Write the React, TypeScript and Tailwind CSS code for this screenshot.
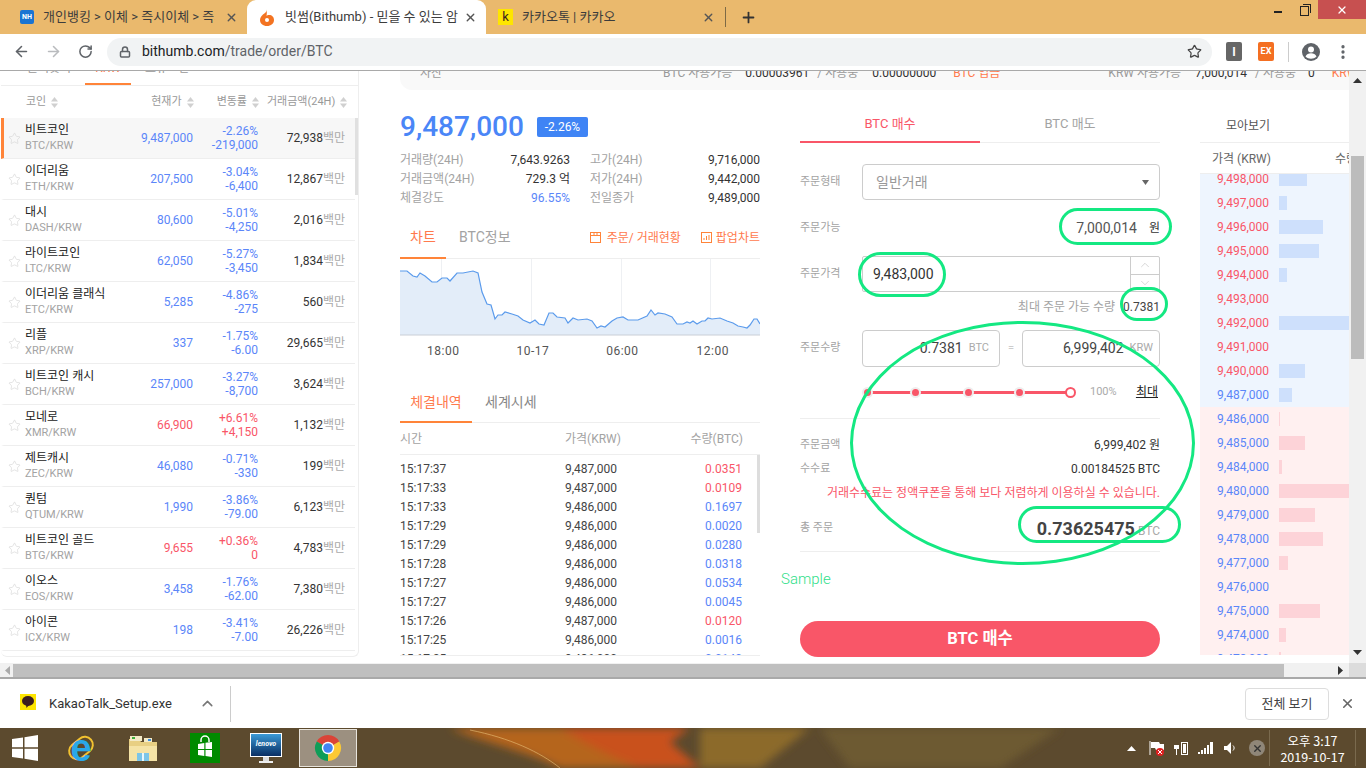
import { ArrowLeft, ArrowRight, ChevronDown, ChevronUp, Lock, MoreVertical, Plus, RotateCw, Star, X } from 'lucide-react';

const COINS = [
  ['비트코인', 'BTC/KRW', '9,487,000', '-2.26%', '-219,000', '72,938'],
  ['이더리움', 'ETH/KRW', '207,500', '-3.04%', '-6,400', '12,867'],
  ['대시', 'DASH/KRW', '80,600', '-5.01%', '-4,250', '2,016'],
  ['라이트코인', 'LTC/KRW', '62,050', '-5.27%', '-3,450', '1,834'],
  ['이더리움 클래식', 'ETC/KRW', '5,285', '-4.86%', '-275', '560'],
  ['리플', 'XRP/KRW', '337', '-1.75%', '-6.00', '29,665'],
  ['비트코인 캐시', 'BCH/KRW', '257,000', '-3.27%', '-8,700', '3,624'],
  ['모네로', 'XMR/KRW', '66,900', '+6.61%', '+4,150', '1,132'],
  ['제트캐시', 'ZEC/KRW', '46,080', '-0.71%', '-330', '199'],
  ['퀀텀', 'QTUM/KRW', '1,990', '-3.86%', '-79.00', '6,123'],
  ['비트코인 골드', 'BTG/KRW', '9,655', '+0.36%', '0', '4,783'],
  ['이오스', 'EOS/KRW', '3,458', '-1.76%', '-62.00', '7,380'],
  ['아이콘', 'ICX/KRW', '198', '-3.41%', '-7.00', '26,226'],
];

const TRADES: [string, string, string, boolean][] = [
  ['15:17:37', '9,487,000', '0.0351', true],
  ['15:17:33', '9,487,000', '0.0109', true],
  ['15:17:33', '9,486,000', '0.1697', false],
  ['15:17:29', '9,486,000', '0.0020', false],
  ['15:17:29', '9,486,000', '0.0280', false],
  ['15:17:28', '9,486,000', '0.0318', false],
  ['15:17:27', '9,486,000', '0.0534', false],
  ['15:17:27', '9,486,000', '0.0045', false],
  ['15:17:26', '9,487,000', '0.0120', true],
  ['15:17:25', '9,486,000', '0.0016', false],
  ['15:17:25', '9,486,000', '0.0140', false],
];

const ASKS: [string, number][] = [
  ['9,498,000', 28], ['9,497,000', 8], ['9,496,000', 44], ['9,495,000', 40], ['9,494,000', 8],
  ['9,493,000', 0], ['9,492,000', 70], ['9,491,000', 0], ['9,490,000', 26],
];
const BIDS: [string, number][] = [
  ['9,486,000', 1], ['9,485,000', 26], ['9,484,000', 3], ['9,480,000', 70], ['9,479,000', 36],
  ['9,478,000', 44], ['9,477,000', 9], ['9,476,000', 0], ['9,475,000', 41], ['9,474,000', 7], ['9,473,000', 2],
];

// traced from the chart, in px relative to the plot's top-left
const CHART = [
  [0, 52], [7, 52], [13, 57], [17, 58], [20, 54], [25, 57], [32, 63], [37, 63], [42, 59], [47, 59], [50, 62],
  [57, 54], [63, 54], [73, 52], [78, 54], [82, 73], [87, 85], [91, 86], [95, 100], [98, 96], [102, 96], [105, 93],
  [112, 95], [118, 97], [123, 101], [130, 104], [135, 101], [139, 105], [144, 106], [149, 94], [153, 94], [157, 98],
  [165, 99], [168, 104], [173, 99], [178, 101], [187, 100], [192, 102], [197, 109], [201, 107], [205, 108], [212, 102],
  [217, 99], [223, 98], [228, 101], [238, 101], [247, 97], [251, 91], [255, 96], [258, 94], [265, 95], [272, 98],
  [277, 105], [283, 105], [287, 103], [290, 104], [293, 102], [297, 105], [302, 102], [305, 102], [308, 99], [312, 100],
  [320, 99], [327, 102], [333, 104], [338, 107], [343, 108], [347, 109], [350, 106], [354, 100], [357, 100], [360, 105],
].map(([x, y]) => [x, y - 40]);

const linePath = CHART.map(([x, y]) => `${x},${y}`).join(' ');

function SortIcon() {
  return (
    <svg width="7" height="13" viewBox="0 0 7 13" className="shrink-0 text-[#d0d0d0]" fill="currentColor">
      <path d="M3.5 1 7 5.5H0z" />
      <path d="M3.5 12 0 7.5h7z" />
    </svg>
  );
}

function BrowserTabs() {
  return (
    <div className="relative flex h-[34px] shrink-0 items-stretch bg-[#eab96d] text-[13px] text-[#3c3c3c]">
      <div className="flex w-[247px] items-center pl-[20px]">
        <div className="flex h-[14px] w-[14px] shrink-0 items-center justify-center rounded-[2px] bg-[#1a74d2] text-[7px] font-bold text-white">NH</div>
        <span className="ml-[9px] w-[172px] overflow-hidden whitespace-nowrap">개인뱅킹 &gt; 이체 &gt; 즉시이체 &gt; 즉시이체</span>
        <X size={13} strokeWidth={2.5} className="ml-[10px] shrink-0 text-[#555]" />
      </div>
      <div className="flex w-[239px] items-center rounded-t-[9px] bg-white pl-[13px]">
        <svg width="14" height="17" viewBox="0 0 14 17" className="shrink-0">
          <path d="M6 0c1 2 0 3-1 4C2 6 0 8 0 11c0 3.500 3 6 7 6s7-2.500 7-6c0-3-2-5-5-5-1 0-2 .3-2.500 1C7 4.500 7 2 6 0z" fill="#f37321" />
          <circle cx="7" cy="11" r="2" fill="#fff" />
        </svg>
        <span className="ml-[11px] w-[173px] overflow-hidden whitespace-nowrap">빗썸(Bithumb) - 믿을 수 있는 암호화폐</span>
        <X size={13} strokeWidth={2.5} className="ml-[6px] shrink-0 text-[#555]" />
      </div>
      <div className="flex w-[239px] items-center pl-[12px]">
        <div className="flex h-[16px] w-[15px] shrink-0 items-center justify-center bg-[#fee500] text-[13px] text-[#3c1e1e]">k</div>
        <span className="ml-[9px] w-[180px] whitespace-nowrap">카카오톡 | 카카오</span>
        <X size={13} strokeWidth={2.5} className="shrink-0 text-[#555]" />
      </div>
      <div className="mt-[7px] h-[20px] w-px bg-[#7d6a45]" />
      <Plus size={17} strokeWidth={2.5} className="ml-[14px] mt-[9px] text-[#333]" />
      <div className="ml-auto flex h-[19px] items-start">
        <div className="mr-[18px] mt-[11px] h-[2px] w-[8px] bg-[#222]" />
        <div className="relative mr-[9px] mt-[6px] h-[10px] w-[9px] border border-[#222]">
          <div className="absolute -right-[3px] -top-[3px] h-[9px] w-[8px] border-r border-t border-[#222]" />
        </div>
        <div className="flex h-[19px] w-[48px] items-center justify-center bg-[#c75050]">
          <X size={12} strokeWidth={2.5} className="text-white" />
        </div>
      </div>
    </div>
  );
}

function Toolbar() {
  return (
    <div className="flex h-[37px] shrink-0 items-center border-b border-[#a9a9a9] bg-white pb-[1px]">
      <ArrowLeft size={17} strokeWidth={2.2} className="ml-[13px] text-[#5f6368]" />
      <ArrowRight size={17} strokeWidth={2.2} className="ml-[15px] text-[#b9bbbe]" />
      <RotateCw size={15} strokeWidth={2.4} className="ml-[16px] text-[#5f6368]" />
      <div className="ml-[14px] flex h-[28px] w-[1105px] items-center rounded-full bg-[#f1f3f4] pl-[12px] text-[14px]">
        <Lock size={12} strokeWidth={3} className="text-[#5f6368]" />
        <span className="ml-[11px] text-[#202124]">bithumb.com</span>
        <span className="text-[#5f6368]">/trade/order/BTC</span>
        <Star size={15} strokeWidth={2} className="ml-auto mr-[10px] text-[#444]" />
      </div>
      <div className="ml-[14px] flex h-[19px] w-[16px] items-center justify-center rounded-[2px] bg-[#666] text-[12px] font-bold text-white">I</div>
      <div className="ml-[16px] flex h-[19px] w-[16px] items-center justify-center rounded-[2px] bg-[#f46f22] text-[9px] font-bold text-white">EX</div>
      <div className="ml-[14px] h-[20px] w-px bg-[#ccc]" />
      <svg width="18" height="18" viewBox="0 0 18 18" className="ml-[13px]">
        <circle cx="9" cy="9" r="9" fill="#5f6368" />
        <circle cx="9" cy="6.500" r="3" fill="#fff" />
        <path d="M3.500 13.500c1-2.500 3-3.200 5.500-3.200s4.500.7 5.500 3.200C13 15 11 15.700 9 15.700S5 15 3.500 13.500z" fill="#fff" />
      </svg>
      <MoreVertical size={18} strokeWidth={2.4} className="ml-[14px] text-[#5f6368]" />
    </div>
  );
}

function CoinList() {
  return (
    <div className="ml-px w-[358px] shrink-0 rounded-b-[6px] border-b border-r border-[#eee] pb-[5px]">
      <div className="flex h-[45px] items-end whitespace-nowrap border-b border-[#eee] text-[12px] text-[#999]">
        <span className="mb-[8px] ml-[26px] w-[58px]">즐겨찾기</span>
        <div className="relative flex h-[45px] w-[46px] justify-center border-b-2 border-[#ff8439]">
          <span className="absolute bottom-[6px] text-[#ff7a4d]">KRW</span>
        </div>
        <span className="mb-[8px] ml-[14px]">보유코인</span>
      </div>
      <div className="flex h-[32px] items-center whitespace-nowrap text-[11px] text-[#999]">
        <span className="ml-[25px]">코인</span>
        <span className="ml-[5px]"><SortIcon /></span>
        <span className="ml-[93px]">현재가</span>
        <span className="ml-[5px]"><SortIcon /></span>
        <span className="ml-[23px]">변동률</span>
        <span className="ml-[5px]"><SortIcon /></span>
        <span className="ml-[8px]">거래금액(24H)</span>
        <span className="ml-[5px]"><SortIcon /></span>
      </div>
      <div className="flex">
        <div className="w-[355px]">
          {COINS.map((c, i) => {
            const up = c[3].startsWith('+');
            const priceColor = up ? 'text-[#f95668]' : 'text-[#5b86f9]';
            return (
              <div
                key={c[1]}
                className={`flex h-[41px] items-center border-b border-[#eee] ${i === 0 ? 'border-l-[3px] border-l-[#ff8439] bg-[#f7f7f7]' : 'border-l-[3px] border-l-transparent'}`}
              >
                <Star size={13} strokeWidth={1.2} className="ml-[4px] shrink-0 text-[#d5d5d5]" />
                <div className="ml-[4px] w-[100px] shrink-0 whitespace-nowrap leading-[15px]">
                  <div className="text-[12px] text-[#222]">{c[0]}</div>
                  <div className="text-[11px] text-[#a3a3a3]">{c[1]}</div>
                </div>
                <div className={`w-[68px] shrink-0 text-right text-[12px] ${priceColor}`}>{c[2]}</div>
                <div className={`w-[65px] shrink-0 text-right text-[12px] leading-[14px] ${priceColor}`}>
                  <div>{c[3]}</div>
                  <div>{c[4]}</div>
                </div>
                <div className="w-[87px] shrink-0 text-right text-[12px] text-[#333]">
                  {c[5]}
                  <span className="text-[#aaa]">백만</span>
                </div>
              </div>
            );
          })}
        </div>
        <div className="w-[3px]">
          <div className="h-[77px] bg-[#e0e0e0]" />
        </div>
      </div>
    </div>
  );
}

function TopBar() {
  return (
    <div className="flex h-[49px] items-end whitespace-nowrap rounded-bl-[12px] bg-[#f9f9f9] pb-[8px] pl-[20px] text-[12px] text-[#999]">
      <span>자산</span>
      <span className="ml-[221px]">BTC 사용가능</span>
      <span className="ml-[13px] text-[#333]">0.00003961</span>
      <span className="ml-[8px]">/ 사용중</span>
      <span className="ml-[14px] text-[#333]">0.00000000</span>
      <span className="ml-[17px] text-[#ff7a4d]">BTC 입금</span>
      <span className="ml-[108px]">KRW 사용가능</span>
      <span className="ml-[14px] text-[#333]">7,000,014</span>
      <span className="ml-[8px]">/ 사용중</span>
      <span className="ml-[12px] text-[#333]">0</span>
      <span className="ml-[17px] text-[#ff7a4d]">KRW</span>
    </div>
  );
}

function Stat({ label, value, blue }: { label: string; value: string; blue?: boolean }) {
  return (
    <div className="flex h-[19px] items-center justify-between text-[12px]">
      <span className="text-[#a3a3a3]">{label}</span>
      <span className={blue ? 'text-[#5b86f9]' : 'text-[#333]'}>{value}</span>
    </div>
  );
}

function MarketColumn() {
  return (
    <div className="w-[360px] shrink-0">
      <div className="mt-[21px] flex h-[32px] items-center">
        <span className="text-[28px] font-medium leading-none text-[#4a86f7]">9,487,000</span>
        <span className="ml-[13px] flex h-[20px] w-[51px] items-center justify-center rounded-[2px] bg-[#3f84f5] text-[12px] text-white">-2.26%</span>
      </div>
      <div className="mt-[7px] grid grid-cols-[170px_170px] gap-x-[20px]">
        <Stat label="거래량(24H)" value="7,643.9263" />
        <Stat label="고가(24H)" value="9,716,000" />
        <Stat label="거래금액(24H)" value="729.3 억" />
        <Stat label="저가(24H)" value="9,442,000" />
        <Stat label="체결강도" value="96.55%" blue />
        <Stat label="전일종가" value="9,489,000" />
      </div>

      <div className="mt-[10px] flex h-[42px] items-stretch border-b border-[#eee] text-[14px]">
        <div className="-mb-px flex w-[46px] items-center justify-center border-b-2 border-[#ff8439] text-[#ff7a4d]">차트</div>
        <div className="ml-[13px] flex items-center text-[#a3a3a3]">BTC정보</div>
        <div className="ml-auto flex items-center text-[12px] text-[#ff7a4d]">
          <svg width="11" height="11" viewBox="0 0 11 11" fill="none" stroke="#ff8439">
            <rect x="0.500" y="0.500" width="10" height="10" />
            <path d="M1 3.500h9M3 2h2M6 2h2" />
          </svg>
          <span className="ml-[6px]">주문/ 거래현황</span>
          <svg width="11" height="11" viewBox="0 0 11 11" fill="none" stroke="#ff8439" className="ml-[20px]">
            <rect x="0.500" y="0.500" width="10" height="10" />
            <path d="M3 8V6M5.500 8V4M8 8V3" />
          </svg>
          <span className="ml-[4px]">팝업차트</span>
        </div>
      </div>

      <svg width="360" height="77" viewBox="0 0 360 77" className="block">
        <path d="M41.500 0V76M131.500 0V76M221.500 0V76M310.500 0V76" stroke="#eef0f3" />
        <polygon points={`0,76 ${linePath} 360,76`} fill="#e3edf9" />
        <polyline points={linePath} fill="none" stroke="#5b9bec" strokeWidth="1.200" />
        <path d="M0 76H360" stroke="#c9ced6" />
      </svg>
      <div className="flex h-[29px] items-center text-[12px] tracking-[0.5px] text-[#555]">
        <span className="ml-[27px]">18:00</span>
        <span className="ml-[57px]">10-17</span>
        <span className="ml-[57px]">06:00</span>
        <span className="ml-[58px]">12:00</span>
      </div>

      <div className="mt-[14px] flex h-[44px] items-stretch border-b border-[#eee] text-[14px]">
        <div className="-mb-px flex w-[72px] items-center justify-center border-b-2 border-[#ff8439] pt-[4px] text-[#ff7a4d]">체결내역</div>
        <div className="ml-[13px] flex items-center pt-[4px] text-[#888]">세계시세</div>
      </div>
      <div className="flex h-[32px] items-center border-b border-[#eee] text-[12px] text-[#a3a3a3]">
        <span className="w-[165px]">시간</span>
        <span>가격(KRW)</span>
        <span className="ml-auto mr-[17px]">수량(BTC)</span>
      </div>
      <div className="flex h-[201px] overflow-hidden border-b border-[#eee]">
        <div className="flex-1 pt-[4px]">
          {TRADES.map((t, i) => (
            <div key={i} className="flex h-[19px] items-center text-[12px] text-[#444]">
              <span className="w-[165px]">{t[0]}</span>
              <span>{t[1]}</span>
              <span className={`ml-auto mr-[15px] ${t[3] ? 'text-[#f95668]' : 'text-[#5b86f9]'}`}>{t[2]}</span>
            </div>
          ))}
        </div>
        <div className="w-[3px]">
          <div className="h-[78px] bg-[#ddd]" />
        </div>
      </div>
    </div>
  );
}

function OrderColumn() {
  return (
    <div className="w-[360px] shrink-0 text-[11px] text-[#a3a3a3]">
      <div className="flex h-[53px]">
        <div className="flex w-[180px] items-center justify-center border-b-2 border-[#f95668] pt-[17px] text-[13px] text-[#f95668]">BTC 매수</div>
        <div className="flex w-[180px] items-center justify-center border-b border-[#eee] pt-[16px] text-[13px] text-[#a3a3a3]">BTC 매도</div>
      </div>

      <div className="mt-[21px] flex h-[36px] items-center">
        <span className="w-[62px]">주문형태</span>
        <div className="flex h-[36px] flex-1 items-center rounded-[4px] border border-[#ccc] pl-[13px] pr-[10px] text-[14px] text-[#999]">
          일반거래
          <svg width="7" height="5" viewBox="0 0 7 5" className="ml-auto" fill="#666"><path d="M0 0h7L3.500 5z" /></svg>
        </div>
      </div>

      <div className="mt-[10px] flex h-[36px] items-center">
        <span>주문가능</span>
        <span className="ml-auto text-[14px] text-[#555]">7,000,014</span>
        <span className="ml-[12px] text-[12px] text-[#333]">원</span>
      </div>

      <div className="mt-[10px] flex h-[36px] items-center">
        <span className="w-[62px]">주문가격</span>
        <div className="flex h-[36px] flex-1 items-center rounded-[2px] border border-[#ccc] pl-[10px] text-[14px] text-[#333]">
          9,483,000
          <div className="ml-auto flex h-full w-[29px] flex-col border-l border-[#ccc] text-[#bbb]">
            <div className="flex flex-1 items-center justify-center border-b border-[#ccc]"><ChevronUp size={14} strokeWidth={1} /></div>
            <div className="flex flex-1 items-center justify-center"><ChevronDown size={14} strokeWidth={1} /></div>
          </div>
        </div>
      </div>

      <div className="mt-[7px] flex h-[16px] items-center justify-end text-[12px]">
        <span>최대 주문 가능 수량</span>
        <span className="ml-[8px] text-[#444]">0.7381</span>
      </div>

      <div className="mt-[15px] flex h-[37px] items-center">
        <span className="w-[62px]">주문수량</span>
        <div className="flex h-[37px] w-[138px] items-center justify-end rounded-[4px] border border-[#ccc] pr-[10px] text-[14px] text-[#444]">
          0.7381<span className="ml-[6px] text-[11px] text-[#aaa]">BTC</span>
        </div>
        <span className="w-[22px] text-center text-[11px] text-[#ccc]">=</span>
        <div className="flex h-[37px] w-[138px] items-center justify-end rounded-[4px] border border-[#ccc] pr-[6px] text-[14px] text-[#444]">
          6,999,402<span className="ml-[6px] text-[11px] text-[#aaa]">KRW</span>
        </div>
      </div>

      <div className="mt-[17px] flex h-[16px] items-center">
        <div className="relative ml-[65px] h-[3px] w-[208px] bg-[#f95668]">
          {[0, 48, 101, 152].map((x) => (
            <span key={x} className="absolute -top-[2px] h-[7px] w-[7px] rounded-full bg-[#f95668] ring-2 ring-[#eee]" style={{ left: x - 1 }} />
          ))}
          <span className="absolute -right-[3px] -top-[4px] h-[11px] w-[11px] rounded-full border-2 border-[#f95668] bg-white" />
        </div>
        <span className="ml-[17px] text-[11px] text-[#aaa]">100%</span>
        <span className="ml-auto mr-[2px] text-[12px] text-[#222] underline">최대</span>
      </div>

      <div className="mt-[18px] border-t border-[#eee] pt-[17px]">
        <div className="flex h-[18px] items-center justify-between">
          <span>주문금액</span>
          <span className="text-[12px] text-[#333]">6,999,402 원</span>
        </div>
        <div className="mt-[6px] flex h-[18px] items-center justify-between">
          <span>수수료</span>
          <span className="text-[12px] text-[#333]">0.00184525 BTC</span>
        </div>
        <div className="mt-[6px] flex h-[18px] items-center justify-end text-[12px] text-[#f95668]">거래수수료는 정액쿠폰을 통해 보다 저렴하게 이용하실 수 있습니다.</div>
        <div className="mt-[12px] flex h-[28px] items-center justify-between">
          <span>총 주문</span>
          <span className="flex items-baseline text-[12px] text-[#aaa]">
            <span className="mr-[3px] text-[18px] font-bold text-[#444]">0.73625475</span>BTC
          </span>
        </div>
      </div>

      <div className="mt-[9px] border-t border-[#eee]" />
      <div className="-ml-[19px] mt-[15px] h-[24px] text-[15px] font-light leading-[24px] text-[#2fe08a]">Sample</div>
      <div className="mt-[30px] flex h-[36px] items-center justify-center rounded-full bg-[#f95668] text-[16.5px] font-bold text-white">BTC 매수</div>
    </div>
  );
}

function BookRow({ price, bar, ask }: { price: string; bar: number; ask: boolean }) {
  return (
    <div className="flex h-[24px] items-center">
      <span className={`w-[69px] text-right text-[12px] ${ask ? 'text-[#f95668]' : 'text-[#5b86f9]'}`}>{price}</span>
      <div className={`ml-[10px] h-[14px] ${ask ? 'bg-[#cee0fc]' : 'bg-[#fdd3d8]'}`} style={{ width: bar }} />
    </div>
  );
}

function OrderBook() {
  return (
    <div className="w-[149px] shrink-0 overflow-hidden text-[12px]">
      <div className="flex h-[53px] items-center border-b border-[#eee] pl-[26px] pt-[19px] text-[#555]">모아보기</div>
      <div className="flex h-[31px] items-center justify-between border-b border-[#eee] pl-[12px] pt-[2px] text-[#666]">
        <span>가격 (KRW)</span>
        <span className="-mr-[8px] whitespace-nowrap">수량</span>
      </div>
      <div className="h-[233px] overflow-hidden bg-[#eef5fe]">
        <div className="-mt-[7px]">
          {ASKS.map(([p, w]) => <BookRow key={p} price={p} bar={w} ask />)}
          <div className="flex h-[24px] items-center">
            <span className="w-[69px] text-right text-[#5b86f9]">9,487,000</span>
            <div className="ml-[10px] h-[14px] w-[13px] bg-[#cee0fc]" />
          </div>
        </div>
      </div>
      <div className="h-[248px] overflow-hidden bg-[#fff0f0]">
        {BIDS.map(([p, w]) => <BookRow key={p} price={p} bar={w} ask={false} />)}
      </div>
    </div>
  );
}

function ScrollbarV() {
  return (
    <div className="relative flex w-[17px] shrink-0 flex-col items-center bg-[#f1f1f1]">
      <svg width="9" height="5" viewBox="0 0 9 5" className="mt-[7px]" fill="#333"><path d="M4.500 0 9 5H0z" /></svg>
      <div className="mt-[73px] h-[203px] w-[13px] bg-[#bcbcbc]" />
      <svg width="9" height="5" viewBox="0 0 9 5" className="mb-[8px] mt-auto" fill="#333"><path d="M4.500 5 0 0h9z" /></svg>
    </div>
  );
}

function ScrollbarH() {
  return (
    <div className="flex h-[16px] shrink-0 items-center border-b-2 border-[#a9a9a9] bg-[#f1f1f1]">
      <svg width="5" height="9" viewBox="0 0 5 9" className="ml-[5px]" fill="#aaa"><path d="M0 4.500 5 0v9z" /></svg>
      <div className="ml-[3px] h-[13px] w-[1271px] bg-[#bfbfbf]" />
      <svg width="5" height="9" viewBox="0 0 5 9" className="ml-[54px]" fill="#333"><path d="M5 4.500 0 9V0z" /></svg>
      <div className="ml-auto h-full w-[17px] bg-[#dcdcdc]" />
    </div>
  );
}

function DownloadBar() {
  return (
    <div className="flex h-[49px] shrink-0 items-center bg-white">
      <svg width="16" height="16" viewBox="0 0 16 16" className="ml-[20px] mb-[4px]">
        <rect width="16" height="16" fill="#fee500" />
        <ellipse cx="8" cy="7" rx="6" ry="5" fill="#3c1e1e" />
        <path d="M6 10.500 6.500 14 9 11z" fill="#3c1e1e" />
      </svg>
      <span className="ml-[13px] text-[13px] text-[#333]">KakaoTalk_Setup.exe</span>
      <ChevronUp size={17} strokeWidth={2.2} className="ml-[27px] text-[#777]" />
      <div className="ml-[14px] h-[36px] w-px bg-[#ccc]" />
      <div className="ml-auto flex h-[32px] w-[84px] items-center justify-center rounded-[4px] border border-[#ddd] text-[13px] text-[#444]">전체 보기</div>
      <X size={15} strokeWidth={2.5} className="ml-[11px] mr-[11px] text-[#666]" />
    </div>
  );
}

function ChromeLogo() {
  return (
    <svg width="30" height="30" viewBox="0 0 30 30">
      <path d="M15 15 3.740 8.500A13 13 0 0 1 26.260 8.500z" fill="#db4437" />
      <path d="M15 15 26.260 8.500A13 13 0 0 1 15 28z" fill="#fcc934" />
      <path d="M15 15V28A13 13 0 0 1 3.740 8.500z" fill="#0f9d58" />
      <circle cx="15" cy="15" r="6.200" fill="#fff" />
      <circle cx="15" cy="15" r="4.800" fill="#4285f4" />
    </svg>
  );
}

function Taskbar() {
  return (
    <div className="relative flex h-[40px] shrink-0 items-center overflow-hidden bg-[#5c4a2e] text-white">
      {/* wallpaper peeking through the glass */}
      <svg width="1366" height="40" viewBox="0 0 1366 40" className="absolute left-0 top-0" aria-hidden="true">
        <defs>
          <filter id="soft"><feGaussianBlur stdDeviation="4" /></filter>
        </defs>
        <g filter="url(#soft)">
          <path d="M450 0h240l-30 16 40 24H560C530 24 480 14 450 0z" fill="#b5651e" />
          <path d="M560 0h130l-20 14 30 26h-60C600 24 580 12 560 0z" fill="#c9511f" />
          <path d="M700 0h110L760 40h-60z" fill="#8c6a2c" />
          <path d="M820 0h240l-60 40H850z" fill="#6d5a30" />
        </g>
        <path d="M470 2c40 8 70 22 90 38" stroke="#e9c27a" strokeWidth="1" fill="none" opacity="0.600" />
      </svg>

      <svg width="26" height="26" viewBox="0 0 26 26" className="relative ml-[12px]" fill="#fff">
        <path d="M0 4 11 2.500V12.300H0z" />
        <path d="M12.500 2.300 26 0V12.300H12.500z" />
        <path d="M0 13.800H11V23.500L0 22z" />
        <path d="M12.500 13.800H26V26L12.500 23.700z" />
      </svg>
      <div className="relative ml-[28px] flex h-[30px] w-[30px] items-center justify-center">
        <span className="absolute inset-x-[1px] inset-y-[6px] -rotate-[40deg] rounded-full border-2 border-[#f2c230]" />
        <span className="relative font-['Liberation_Sans',sans-serif] text-[38px] font-bold leading-none text-[#2aa8e8]">e</span>
      </div>
      <svg width="30" height="30" viewBox="0 0 30 30" className="relative ml-[32px]">
        <path d="M1 6h10l2 3h16v19H1z" fill="#e8cf83" />
        <path d="M2 3h12v5H2z" fill="#f3eac8" />
        <path d="M4 4h3v2H4z" fill="#3cae3c" />
        <path d="M16 5h8v4h-8z" fill="#f3eac8" />
        <path d="M20 6h3v2h-3z" fill="#3c8fe0" />
        <path d="M1 13h28v15H1z" fill="#f5e3a6" />
        <path d="M9 20h12v8H9z" fill="#7cc5e8" />
        <path d="M14 20h2v8h-2z" fill="#e9f6fc" />
      </svg>
      <svg width="30" height="30" viewBox="0 0 30 30" className="relative ml-[32px]">
        <rect width="30" height="30" fill="#008a00" />
        <path d="M11 9V7a4 4 0 0 1 8 0v2" fill="none" stroke="#fff" strokeWidth="1.500" />
        <path d="M8 11l6.300-1v6H8zM15.500 9.800 22 9v7h-6.500zM8 17h6.300v6L8 22zM15.500 17H22v7l-6.500-.9z" fill="#fff" />
      </svg>
      <div className="relative ml-[30px] flex h-[31px] w-[32px] flex-col items-center">
        <div className="flex h-[24px] w-[32px] items-center justify-center border border-white bg-gradient-to-b from-[#3b9ad6] to-[#0b2f63] text-[7px] font-bold italic text-white">lenovo</div>
        <div className="h-[4px] w-[6px] bg-[#ddd]" />
        <div className="h-[2px] w-[14px] bg-[#eee]" />
      </div>
      <div className="relative ml-[17px] flex h-[38px] w-[58px] items-center justify-center border border-[#e8e4dc] bg-[#9c9080]">
        <ChromeLogo />
      </div>

      <div className="relative ml-auto flex items-center">
        <svg width="9" height="5" viewBox="0 0 9 5" fill="#fff"><path d="M4.500 0 9 5H0z" /></svg>
        <svg width="16" height="16" viewBox="0 0 16 16" className="ml-[13px]">
          <path d="M1 1v14" stroke="#fff" />
          <path d="M2 2h8l1 2h4v6H7l-1-2H2z" fill="#fff" />
          <circle cx="11" cy="12" r="4" fill="#e02020" />
          <path d="M9 10l4 4M13 10l-4 4" stroke="#fff" />
        </svg>
        <svg width="15" height="16" viewBox="0 0 15 16" className="ml-[9px]" fill="#fff">
          <path d="M1 1v4M4 1v4M0 5h5v4H3v6H2V9H0z" />
          <path fillRule="evenodd" d="M7 2h7v13H7zM8 3v11h5V3z" />
          <path d="M9 4h3v9H9z" />
        </svg>
        <svg width="15" height="12" viewBox="0 0 15 12" className="ml-[9px]" fill="#fff">
          <path d="M0 10h2v2H0zM3 8h2v4H3zM6 6h2v6H6zM9 3h2v9H9zM12 0h3v12h-3z" />
        </svg>
        <svg width="14" height="14" viewBox="0 0 14 14" className="ml-[11px]" fill="#fff">
          <path d="M0 5h3l4-4v12L3 9H0z" />
          <path d="M9 4.500c1.500 1.500 1.500 3.500 0 5" stroke="#fff" fill="none" />
        </svg>
        <div className="ml-[11px] flex h-[16px] w-[16px] items-center justify-center rounded-full bg-[#8f8678]">
          <X size={11} strokeWidth={3} className="text-[#333]" />
        </div>
        <div className="ml-[4px] h-[36px] w-px bg-[#7a6a4e]" />
        <div className="mt-[2px] flex w-[85px] flex-col items-center font-['Noto_Sans_CJK_KR',sans-serif] text-[12.5px] leading-[16px]">
          <div className="h-[16px]">오후 3:17</div>
          <div className="h-[16px]">2019-10-17</div>
        </div>
        <div className="h-[36px] w-px bg-[#7a6a4e]" />
        <div className="w-[10px]" />
      </div>
    </div>
  );
}

export default function App() {
  return (
    <div className="relative flex h-[768px] w-[1366px] flex-col overflow-hidden bg-white font-['Roboto','Noto_Sans_CJK_KR',sans-serif]">
      <BrowserTabs />
      <Toolbar />
      <div className="flex h-[592px] shrink-0">
        <div className="h-full w-[1349px] overflow-hidden">
          <div className="-mt-[30px] flex">
            <CoinList />
            <div className="ml-[41px] flex-1">
              <TopBar />
              <div className="flex gap-[40px]">
                <MarketColumn />
                <OrderColumn />
                <OrderBook />
              </div>
            </div>
          </div>
        </div>
        <ScrollbarV />
      </div>
      <ScrollbarH />
      <DownloadBar />
      <Taskbar />

      {/* hand-drawn green annotations on top of the page */}
      <div className="pointer-events-none absolute left-[1059px] top-[208px] h-[37px] w-[113px] rounded-full border-[3px] border-[#14e882]" />
      <div className="pointer-events-none absolute left-[858px] top-[252px] h-[45px] w-[88px] rounded-[24px] border-[3px] border-[#14e882]" />
      <div className="pointer-events-none absolute left-[1120px] top-[287px] h-[34px] w-[48px] rounded-[17px] border-[3px] border-[#14e882]" />
      <div className="pointer-events-none absolute left-[850px] top-[321px] h-[244px] w-[345px] rounded-[50%] border-[3px] border-[#14e882]" />
      <div className="pointer-events-none absolute left-[1018px] top-[506px] h-[37px] w-[163px] rounded-full border-[3px] border-[#14e882]" />
    </div>
  );
}
